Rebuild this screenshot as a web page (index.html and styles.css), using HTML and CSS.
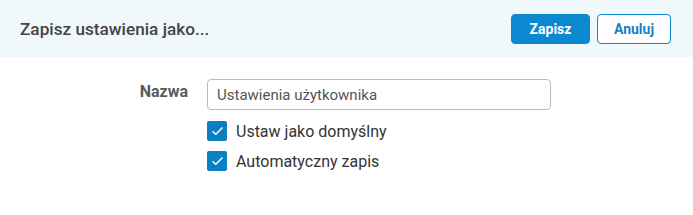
FILE: index.html
```html
<!DOCTYPE html>
<html lang="pl">
<head>
<meta charset="utf-8">
<link rel="stylesheet" href="styles.css">
</head>
<body>
<div class="dialog">
  <header class="head">
    <h1 class="title">Zapisz ustawienia jako...</h1>
    <div class="actions">
      <button class="btn btn-primary">Zapisz</button>
      <button class="btn btn-outline">Anuluj</button>
    </div>
  </header>
  <main class="body">
    <div class="form">
      <label class="label">Nazwa</label>
      <div class="field">
        <div class="input">Ustawienia użytkownika</div>
      </div>
      <div></div>
      <div class="checks">
        <div class="check">
          <span class="box"><svg width="13" height="10" viewBox="0 0 13 10"><path d="M1.5 5.2 L4.8 8.3 L11.5 1.6" fill="none" stroke="#fff" stroke-width="1.4"/></svg></span>
          <span class="check-text">Ustaw jako domyślny</span>
        </div>
        <div class="check">
          <span class="box"><svg width="13" height="10" viewBox="0 0 13 10"><path d="M1.5 5.2 L4.8 8.3 L11.5 1.6" fill="none" stroke="#fff" stroke-width="1.4"/></svg></span>
          <span class="check-text">Automatyczny zapis</span>
        </div>
      </div>
    </div>
  </main>
</div>
</body>
</html>
```
FILE: styles.css
```css
* { box-sizing: border-box; }
html, body { margin: 0; padding: 0; background: #fff; }
body { font-family: Roboto, "Liberation Sans", sans-serif; }
.dialog { width: 693px; height: 215px; }
.head {
  height: 57px;
  background: #f0f8fc;
  display: flex;
  align-items: center;
  justify-content: space-between;
  padding: 0 22px 0 20px;
}
.title {
  margin: 0;
  font-size: 17.2px;
  font-weight: 500;
  color: #444;
}
.actions { display: flex; gap: 7px; margin-top: 1px; }
.btn {
  height: 30px;
  border-radius: 4px;
  font-family: Roboto, "Liberation Sans", sans-serif;
  font-size: 14px;
  font-weight: 700;
  padding: 0;
  cursor: pointer;
}
.btn-primary {
  width: 79px;
  background: #0a88d0;
  color: #fff;
  border: 1px solid #0a88d0;
}
.btn-outline {
  width: 74px;
  background: #fff;
  color: #1a7fbf;
  border: 1px solid #0a88d0;
}
.body { padding-top: 22px; }
.form {
  display: grid;
  grid-template-columns: 188px 344px;
  column-gap: 19px;
  row-gap: 11px;
}
.label {
  text-align: right;
  font-size: 16px;
  font-weight: 700;
  color: #5a5a5a;
  padding-top: 3px;
}
.input {
  height: 31px;
  border: 1px solid #bbb;
  border-radius: 4px;
  padding: 0 9px;
  display: flex;
  align-items: center;
  font-size: 15px;
  color: #555;
}
.checks { display: flex; flex-direction: column; gap: 10px; }
.check { display: flex; align-items: center; gap: 9px; height: 20px; }
.box {
  width: 20px;
  height: 20px;
  border-radius: 2px;
  background: #0a7fc2;
  display: flex;
  align-items: center;
  justify-content: center;
}
.check-text { font-size: 16px; color: #333; }
```
